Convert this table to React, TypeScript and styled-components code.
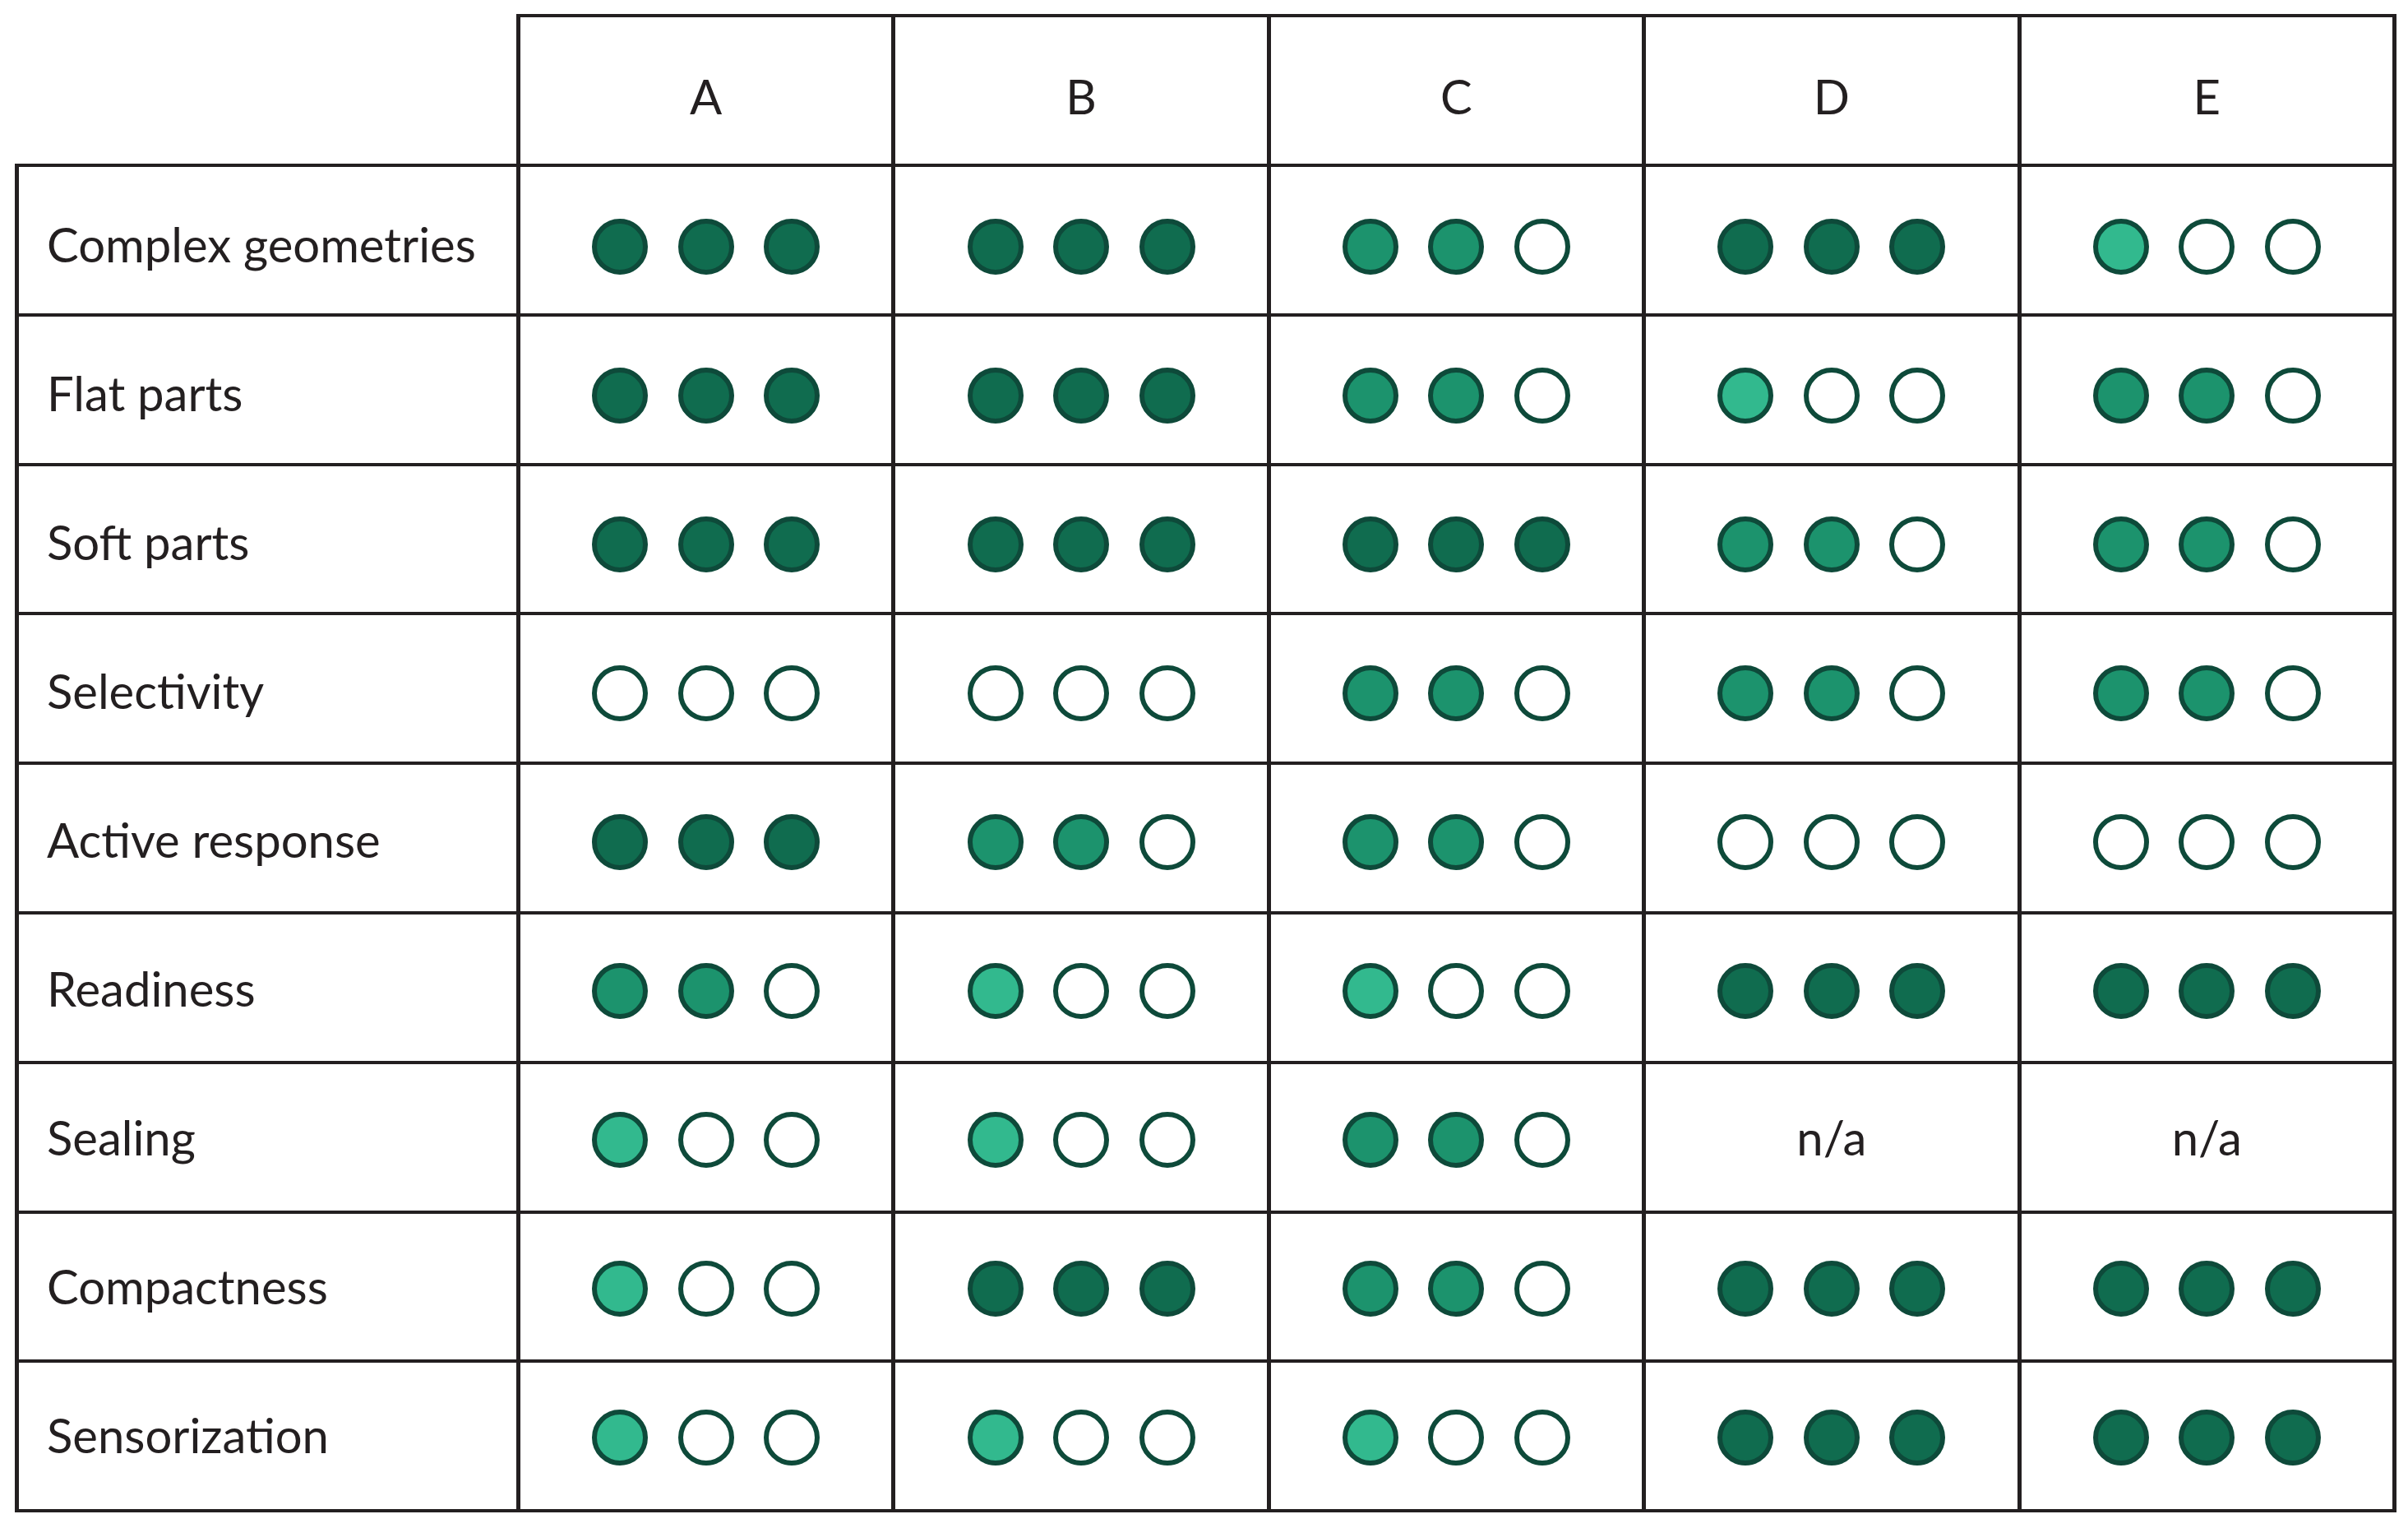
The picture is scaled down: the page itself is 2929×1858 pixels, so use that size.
import React from 'react';
import styled, { createGlobalStyle } from 'styled-components';

type Level = 0 | 1 | 2 | 3 | null;

interface Row {
  readonly label: string;
  readonly values: Level[];
}

const INK = '#231f20';
const RING = '#0e4a3a';
const DARK = '#106c4f';
const MID = '#1c936d';
const LIGHT = '#32b98e';

const columns = ['A', 'B', 'C', 'D', 'E'];

const rows: Row[] = [
  { label: 'Complex geometries', values: [3, 3, 2, 3, 1] },
  { label: 'Flat parts', values: [3, 3, 2, 1, 2] },
  { label: 'Soft parts', values: [3, 3, 3, 2, 2] },
  { label: 'Selectivity', values: [0, 0, 2, 2, 2] },
  { label: 'Active response', values: [3, 2, 2, 0, 0] },
  { label: 'Readiness', values: [2, 1, 1, 3, 3] },
  { label: 'Sealing', values: [1, 1, 2, null, null] },
  { label: 'Compactness', values: [1, 3, 2, 3, 3] },
  { label: 'Sensorization', values: [1, 1, 1, 3, 3] },
];

// which fill each of the three dots gets for a rating
const dotFills = (level: number): string[] => {
  if (level === 3) return [DARK, DARK, DARK];
  if (level === 2) return [MID, MID, 'transparent'];
  if (level === 1) return [LIGHT, 'transparent', 'transparent'];
  return ['transparent', 'transparent', 'transparent'];
};

// content sits a little below centre in the first rows and drifts up row by row
const shift = (base: number, row: number): string => {
  const s = base - 1.6 * row;
  return `padding-top: ${Math.max(0, s)}px; padding-bottom: ${Math.max(0, -s)}px;`;
};

const GlobalStyle = createGlobalStyle`
  html, body {
    margin: 0;
    padding: 0;
    background: #ffffff;
  }
  body {
    font-family: Lato, "Open Sans", "Liberation Sans", sans-serif;
    color: ${INK};
  }
`;

const Page = styled.div`
  padding: 17px 0 0 18px;
`;

const Grid = styled.div`
  display: grid;
  grid-template-columns: 615px repeat(5, 456.4px);
  grid-template-rows: 186px repeat(9, 181.8px);
`;

const Cell = styled.div`
  box-sizing: border-box;
  display: flex;
  align-items: center;
  border-right: 5px solid ${INK};
  border-bottom: 4.5px solid ${INK};
`;

const Corner = styled(Cell)``;

const HeaderCell = styled(Cell)`
  border-top: 4px solid ${INK};
  justify-content: center;
  padding-top: 12px;
  font-size: 58px;
`;

const LabelCell = styled(Cell)<{ $row: number }>`
  border-left: 5px solid ${INK};
  padding-left: 34px;
  ${({ $row }) => shift(10, $row)}
  font-size: 58px;
  white-space: nowrap;
`;

const RatingCell = styled(Cell)<{ $row: number }>`
  justify-content: center;
  gap: 36.5px;
  ${({ $row }) => shift(16, $row)}
  font-size: 58px;
`;

const NotApplicable = styled.span`
  margin-bottom: 7px;
`;

const Dot = styled.span<{ $fill: string }>`
  box-sizing: border-box;
  width: 68px;
  height: 68px;
  border-radius: 50%;
  border: 6px solid ${RING};
  background: ${({ $fill }) => $fill};
`;

const App = () => (
  <Page>
    <GlobalStyle />
    <Grid>
      <Corner />
      {columns.map((c) => (
        <HeaderCell key={c}>{c}</HeaderCell>
      ))}
      {rows.map((row, r) => (
        <React.Fragment key={row.label}>
          <LabelCell $row={r}>{row.label}</LabelCell>
          {row.values.map((v, i) => (
            <RatingCell key={i} $row={r}>
              {v === null ? (
                <NotApplicable>n/a</NotApplicable>
              ) : (
                dotFills(v).map((f, j) => <Dot key={j} $fill={f} />)
              )}
            </RatingCell>
          ))}
        </React.Fragment>
      ))}
    </Grid>
  </Page>
);

export default App;
